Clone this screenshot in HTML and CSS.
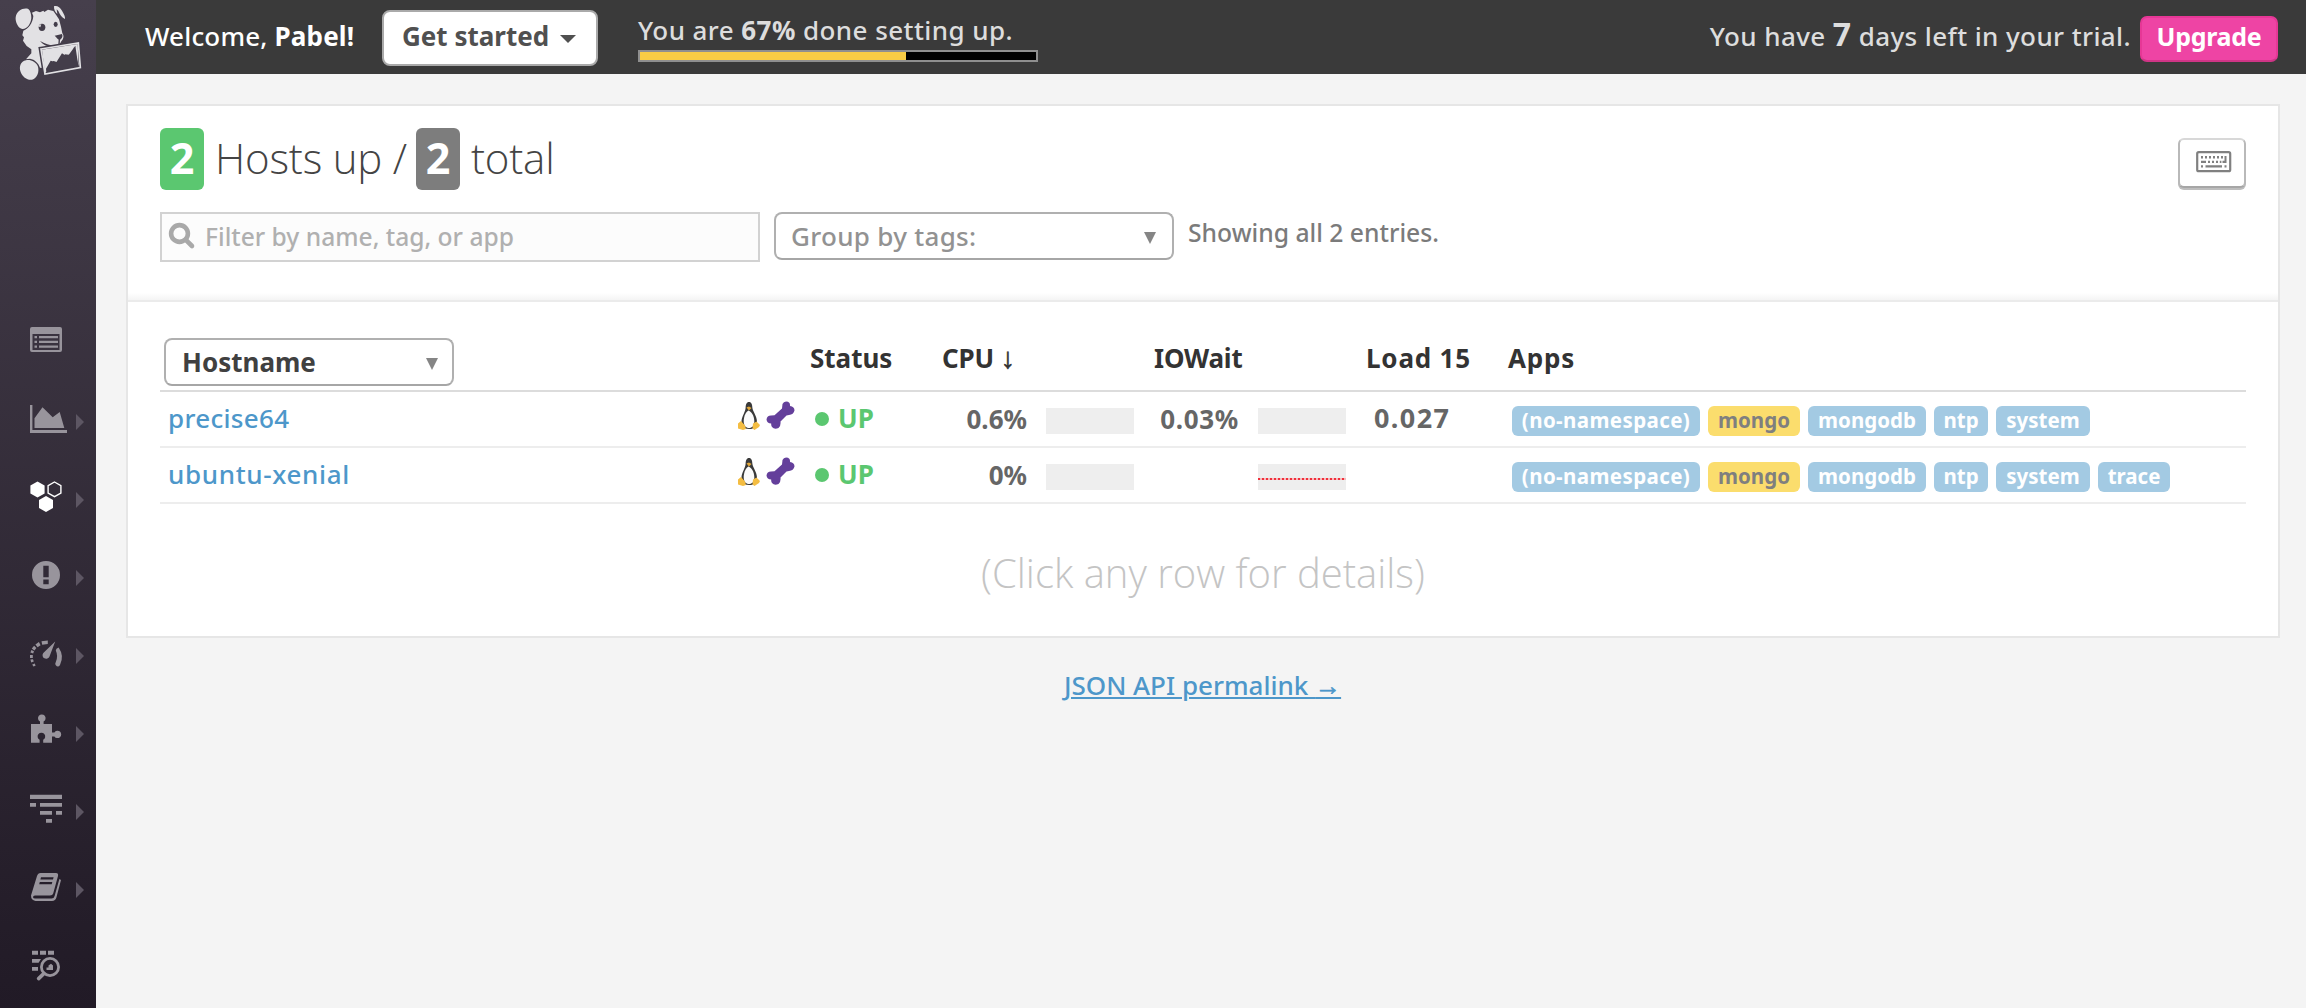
FILE: index.html
```html
<!DOCTYPE html>
<html lang="en">
<head>
<meta charset="utf-8">
<title>Infrastructure List</title>
<link rel="stylesheet" href="styles.css">
</head>
<body>
<aside class="sidebar">
  <svg class="logo" width="96" height="90" viewBox="0 0 96 90">
    <g transform="translate(10 0) scale(.33333)">
      <path class="lt" d="M66 38L78 33L90 37L100 32L103 36L114 29L130 33L138 44L147 58L153 80L157 100C162 106 162 116 154 124C152 130 148 134 142 136C124 138 106 132 90 123C100 134 110 139 122 141L93 145L98 204L90 203C86 190 74 178 60 176L48 178L64 160L64 148L50 138L39 122L42 112L37 106L40 92C56 86 68 70 70 48Z"/>
      <path class="lt ear" d="M55 27C40 22 20 32 17 52C15 66 26 88 38 87C52 86 62 72 64 54C64 42 61 32 55 27Z"/>
      <path class="lt" d="M132 19C140 15 150 22 156 32C162 42 166 50 165 57C156 54 150 44 145 33L140 28L142 42C136 38 131 28 132 19Z"/>
      <path class="lt ear" d="M48 181C32 184 26 200 32 216C38 232 52 241 66 239C82 234 88 216 84 200C78 186 62 178 48 181Z"/>
      <ellipse class="dk" cx="96" cy="82" rx="10" ry="11"/><path class="lt" d="M84 78L94 72L91 82Z"/>
      <ellipse class="dk" cx="137" cy="73" rx="6" ry="8"/>
      <path class="dk" d="M134 107L156 102C160 110 154 118 148 120C142 118 140 112 134 107ZM146 118L150 119L149 134L145 134Z"/>
      <path class="gap" d="M93 147L205 129L211 203L105 222Z"/>
      <path class="edge" d="M93 147L205 129L211 203L105 222Z"/>
      <path class="lt" d="M96 149L203 132L206 200L192 140L189 166L165 163L148 188L130 183L114 212L105 218Z"/>
      <path class="dk" d="M109 217L108 206L122 182L139 187L156 160L172 170L196 137L205 199Z"/>
    </g>
  </svg>
  <nav class="nav">
    <svg viewBox="0 0 96 78"><path fill-rule="evenodd" d="M32 27H60Q62 27 62 29V50Q62 52 60 52H32Q30 52 30 50V29Q30 27 32 27ZM32.5 34V50H59.5V34ZM34.5 36H37V38.3H34.5ZM39 36H58V38.3H39ZM34.5 40.8H37V43.1H34.5ZM39 40.8H58V43.1H39ZM34.5 45.5H37V47.8H34.5ZM39 45.5H58V47.8H39Z"/></svg>
    <svg viewBox="0 0 96 78"><path d="M30 27H32.4V52H67V55H30ZM34.5 40.3L42.5 29.3L52.7 39.3L59.7 34L64.3 50H34.5Z"/><path class="arr" d="M76 36L84 44L76 52Z"/></svg>
    <svg viewBox="0 0 96 78"><path class="on" d="M37.5 25.4L44.6 29.4V37.4L37.5 41.4L30.4 37.4V29.4ZM46 40L53 44V52L46 56L39 52V44Z"/><path class="hex" d="M54.5 26L60.9 29.7V37L54.5 40.7L48.1 37V29.7Z"/><path class="arr" d="M76 36L84 44L76 52Z"/></svg>
    <svg viewBox="0 0 96 78"><path fill-rule="evenodd" d="M46 27A14 14 0 1 1 46 55A14 14 0 1 1 46 27ZM43.3 31.7V43.3H48.7V31.7ZM43.3 45.5V50.2H48.7V45.5Z"/><path class="arr" d="M76 36L84 44L76 52Z"/></svg>
    <svg viewBox="0 0 96 78"><path d="M55.2 29.4L49.5 44.5A3.6 3.6 0 1 1 43.3 41ZM58.6 35.6Q64.5 44 60 53Q58 56 55.6 53Q54.8 52 55.8 50Q58.4 44 55.8 38.5Q55.8 36.5 58.6 35.6Z"/><path d="M41.5 29.2L47.8 28.6V32L42.2 32.8ZM35.4 32.4L38.9 30L40.6 33.2L37.6 35.2ZM31.8 36.6L34.1 33.8L36.4 36L34.4 38.4ZM30.4 40.6L31.4 38L34 39.2L33.2 41.4ZM30 43H32.8V46H30ZM30.4 47.6L33 47.2L33.8 49.6L31.2 50.4ZM32.2 52.4L34.8 51.4L35.6 53.8L33.4 54.6Z"/><path class="arr" d="M76 36L84 44L76 52Z"/></svg>
    <svg viewBox="0 0 96 78"><path d="M31 34H40V31.6A3.8 3.8 0 1 1 43.6 31.6V34H52V42.4H54.4A3.7 3.7 0 1 1 54.4 46.4H52V52.8H43.2V49.8A3.8 3.8 0 1 0 39.6 49.8V52.8H31Z"/><path class="arr" d="M76 36L84 44L76 52Z"/></svg>
    <svg viewBox="0 0 96 78"><path d="M30 26.7H62V31H30ZM30 35H36V38.8H30ZM40 35H62V38.8H40ZM40 43H52V46.8H40ZM56 43H62V46.8H56ZM46 51H52V54.8H46Z"/><path class="arr" d="M76 36L84 44L76 52Z"/></svg>
    <svg viewBox="0 0 96 78"><path fill-rule="evenodd" d="M40.5 27H56Q58.6 27 58 30L53.2 47.5Q52.6 49.6 50 49.6H35Q33 49.8 33 51.2Q33.4 52.6 35 52.6H51.5Q54 52.6 54.6 50L59.4 33L61 34L56.4 51.5Q55.5 54.9 52 54.9H35.5Q31 54.4 31 49.5L37 30Q38 27 40.5 27ZM41 31.2L40.4 33.4H53L53.6 31.2ZM39.8 36L39.2 38.2H51.7L52.3 36Z"/><path class="arr" d="M76 36L84 44L76 52Z"/></svg>
    <svg viewBox="0 0 96 78"><path d="M32 26.7H38V30.8H32ZM40 26.7H46V30.8H40ZM48 26.7H54V30.8H48ZM32 35H41L38.6 38.8H32ZM32 43H38V46.8H32ZM46.5 46V43.5H48.5V41.5L51 39.8L53 41.5V46Z"/><circle class="ring" cx="50" cy="43" r="8.6"/><path class="handle" d="M44 49.4L38.6 54.6"/></svg>
  </nav>
</aside>
<div class="page">
  <header class="topbar">
    <div class="welcome">Welcome, <b>Pabel!</b></div>
    <button class="started">Get started<i class="caret"></i></button>
    <div class="setup">
      <div class="setup-text">You are <b>67%</b> done setting up.</div>
      <div class="bar"><div class="bar-fill" style="width:67.2%"></div></div>
    </div>
    <div class="trial">You have <b>7</b> days left in your trial.</div>
    <button class="upgrade">Upgrade</button>
  </header>
  <main class="card">
    <section class="card-head">
      <div class="title-row">
        <h1 class="title"><span class="badge up">2</span><span class="words">Hosts up /</span><span class="badge">2</span><span class="words">total</span></h1>
        <button class="keys" aria-label="Keyboard shortcuts">
          <svg width="36" height="22" viewBox="0 0 36 22"><rect class="kb" x="1.2" y="1.2" width="33" height="19" rx="1.5"/><path d="M5 5h2v2.500H5zM9 5h2v2.500H9zM13 5h2v2.500h-2zM17 5h2v2.500h-2zM21 5h2v2.500h-2zM25 5h2v2.500h-2zM28.500 5h2v7h-4V9.700h2zM5 9.700h5v2.300H5zM12 9.700h2v2.300h-2zM16 9.700h2v2.300h-2zM20 9.700h2v2.300h-2zM23.800 9.700h1.600v2.300h-1.600zM5 14.300h2v2.300H5zM9.500 14.300h16.500v2.300H9.500zM28.500 14.300h2v2.300h-2z"/></svg>
        </button>
      </div>
      <div class="filters">
        <div class="filter">
          <svg width="28" height="28" viewBox="0 0 28 28"><circle cx="11.500" cy="11.500" r="8.400"/><path d="M17.800 17.800L24 24"/></svg>
          <span>Filter by name, tag, or app</span>
        </div>
        <div class="select group"><span>Group by tags:</span><i class="tri"></i></div>
        <div class="showing">Showing all 2 entries.</div>
      </div>
    </section>
    <section class="hosts">
      <div class="head">
        <div class="select by-name"><span>Hostname</span><i class="tri"></i></div>
        <span>Status</span>
        <span class="tight">CPU <span class="glyph">↓</span></span>
        <span class="tight">IOWait</span>
        <span class="loose">Load 15</span>
        <span class="loose">Apps</span>
      </div>
      <div class="row">
        <a class="name">precise64</a>
        <div class="marks"><svg width="24" height="30" viewBox="0 0 24 30"><use href="#tux"/></svg><svg width="29" height="29" viewBox="0 0 29 29"><use href="#bone"/></svg></div>
        <div class="status"><i class="dot"></i>UP</div>
        <div class="pct">0.6%</div><div class="spark"></div>
        <div class="pct wide">0.03%</div><div class="spark"></div>
        <div class="load">0.027</div>
        <div class="tags"><span class="tag ns">(no-namespace)</span><span class="tag mongo">mongo</span><span class="tag db">mongodb</span><span class="tag ntp">ntp</span><span class="tag sys">system</span></div>
      </div>
      <div class="row">
        <a class="name long">ubuntu-xenial</a>
        <div class="marks"><svg width="24" height="30" viewBox="0 0 24 30"><use href="#tux"/></svg><svg width="29" height="29" viewBox="0 0 29 29"><use href="#bone"/></svg></div>
        <div class="status"><i class="dot"></i>UP</div>
        <div class="pct">0%</div><div class="spark"></div>
        <div class="pct"></div><div class="spark"><div class="flat"></div></div>
        <div class="load"></div>
        <div class="tags"><span class="tag ns">(no-namespace)</span><span class="tag mongo">mongo</span><span class="tag db">mongodb</span><span class="tag ntp">ntp</span><span class="tag sys">system</span><span class="tag trace">trace</span></div>
      </div>
      <p class="hint">(Click any row for details)</p>
    </section>
  </main>
  <a class="permalink">JSON API permalink <span class="glyph">→</span></a>
</div>
<svg class="defs" width="0" height="0">
  <symbol id="tux" viewBox="0 0 24 30">
    <path fill="#3a3a3a" d="M12 1C14.500 1 15.200 3.500 15.400 7C16 11 20 15 20 21C20 26 18 28 12 28C6 28 4 25 4.500 20C5 15 8.300 11 8.600 7C8.700 3.500 9.500 1 12 1Z"/>
    <path fill="#fbfbfb" d="M11.500 9.500C14 10 17.300 15 17.300 20C17.300 25 15 27 12 27C9 27 6.700 25 6.700 20C6.700 15 9.500 10 11.500 9.500Z"/>
    <path fill="#e2a83a" d="M9.500 6.500L12 5.500L14.500 7L12 9.500Z"/>
    <path fill="#f4bd42" d="M4 20L8 24.500L9 28L6 29L1 27.500V22.500ZM19.500 20.500L23 24L22 26L17.500 29L15.500 27.500L16 22.500Z"/>
  </symbol>
  <symbol id="bone" viewBox="0 0 29 29">
    <path fill="#643f9b" d="M16.500 3Q18-.5 22 .800Q24.500 2 24 5Q28.500 5.500 28.500 9.500Q27.500 13.500 23 14L20.500 14.500L14.500 20.500Q15 25 12.500 27Q8.500 29 6 26Q5 24.500 5.200 22.500Q1 22.500 .500 18.500Q1 14.500 5 14.500L8.500 14.300L16 7.500Z"/>
  </symbol>
</svg>
</body>
</html>
```
FILE: styles.css
```css
* { box-sizing: border-box; }

body {
  margin: 0;
  min-height: 1008px;
  display: flex;
  background: #f4f4f4;
  font: 500 26px "Noto Sans", "Open Sans", sans-serif;
  color: #3f3f3f;
}

button { font: inherit; margin: 0; }

/* sidebar */
.sidebar {
  width: 96px;
  height: 1008px;
  flex: none;
  background: linear-gradient(#463f4c, #211a26);
}
.logo { display: block; }
.lt { fill: #e2e1e4; }
.dk { fill: #433d4a; }
.ear { stroke: #433d4a; stroke-width: 4; paint-order: stroke; }
.gap { stroke: #433d4a; stroke-width: 14; }
.edge { fill: #433d4a; stroke: #e2e1e4; stroke-width: 5; }
.nav { display: flex; flex-direction: column; padding-top: 210px; }
.nav svg { width: 96px; height: 78px; fill: #98949c; }
.nav .arr { fill: #5d5663; }
.nav .on { fill: #fff; }
.nav .hex { fill: none; stroke: #fff; stroke-width: 1.4; }
.nav .ring { fill: none; stroke: #98949c; stroke-width: 2.8; }
.nav .handle { stroke: #98949c; stroke-width: 3.6; stroke-linecap: round; }

.page { flex: 1; display: flex; flex-direction: column; }

/* top bar */
.topbar {
  height: 74px;
  padding: 0 28px 0 49px;
  display: flex;
  align-items: flex-start;
  background: #3a3a3a;
  color: #ddd;
  white-space: nowrap;
}
.welcome { width: 237px; line-height: 72px; color: #fff; letter-spacing: .17px; }
.started {
  width: 216px;
  height: 56px;
  padding: 0 0 0 18px;
  margin-top: 10px;
  display: flex;
  align-items: flex-start;
  gap: 11px;
  border: 2px solid #aaa;
  border-radius: 8px;
  background: #fff;
  color: #505050;
  font-weight: 700;
  line-height: 48px;
}
.caret {
  margin-top: 23px;
  border: 8px solid transparent;
  border-top-color: #505050;
  border-bottom: 0;
}
.setup { width: 400px; margin-left: 40px; }
.setup-text { height: 50px; line-height: 60px; letter-spacing: .430px; }
.bar { height: 12px; border: 2px solid #8f8f8f; background: #000; }
.bar-fill { height: 100%; background: #f8cc45; }
.trial { margin-left: auto; line-height: 72px; letter-spacing: .400px; }
.trial b { font-size: 32px; line-height: 1; }
.upgrade {
  width: 138px;
  height: 46px;
  margin: 16px 0 0 9px;
  padding: 0 0 6px;
  border: 2px solid #e63796;
  border-bottom-color: #cf3586;
  border-radius: 7px;
  background: #ee44a4;
  color: #fff;
  font-size: 25px;
  font-weight: 700;
  line-height: 36px;
  letter-spacing: -.3px;
}

/* host card */
.card {
  height: 534px;
  margin: 30px 26px 0 30px;
  border: 2px solid #e6e6e6;
  background: #fff;
}
.card-head {
  height: 196px;
  padding: 22px 32px 0;
  background: linear-gradient(#fff 187px, #f4f4f4 194px, #ebebeb 194px);
}
.title-row { display: flex; justify-content: space-between; height: 84px; }
.title {
  margin: 0;
  display: flex;
  height: 62px;
  font: 300 42px/60px "Open Sans", sans-serif;
  color: #444;
}
.words { padding: 0 9px 0 11px; letter-spacing: -.200px; }
.badge {
  width: 44px;
  height: 62px;
  border-radius: 6px;
  background: #7d7d7d;
  color: #fff;
  text-align: center;
  font-size: 43px;
  font-weight: 700;
}
.badge.up { background: #5bc770; }
.keys {
  width: 68px;
  height: 50px;
  margin: 10px 0 0;
  padding: 0 0 2px 3px;
  display: flex;
  align-items: center;
  justify-content: center;
  border: 2px solid #b9b9b9;
  border-top-color: #d8d8d8;
  border-bottom-color: #a6a6a6;
  border-radius: 6px;
  background: #fff;
  box-shadow: 0 2px 0 #bdbdbd;
}
.keys svg { fill: #808080; }
.keys .kb { fill: none; stroke: #808080; stroke-width: 2.2; }

.filters { display: flex; }
.filter {
  width: 600px;
  height: 50px;
  padding: 0 7px;
  display: flex;
  gap: 9px;
  border: 2px solid #d2d2d2;
  background: #fcfcfc;
  color: #b0b0b0;
  font-size: 24.600px;
  line-height: 45px;
}
.filter svg { margin: 8px 0 0 -1px; fill: none; stroke: #a9a9a9; stroke-width: 4.600; stroke-linecap: round; }
.select {
  height: 48px;
  display: flex;
  justify-content: space-between;
  border: 2px solid #b0b0b0;
  border-bottom-color: #a6a6a6;
  border-radius: 8px;
  background: #fff;
  line-height: 44px;
}
.tri {
  margin-top: 18px;
  border: 6.500px solid transparent;
  border-top: 12px solid #858585;
  border-bottom: 0;
}
.group { width: 400px; margin-left: 14px; padding: 0 16px 0 15px; color: #929292; letter-spacing: .3px; }
.showing { margin-left: 14px; font-size: 24.700px; line-height: 41px; color: #7b7b7b; }

/* host table */
.hosts { padding: 36px 32px 0; }
.head {
  height: 54px;
  display: grid;
  grid-template-columns: 650px 132px 212px 212px 142px 1fr;
  border-bottom: 2px solid #dcdcdc;
  font-weight: 700;
  line-height: 40px;
  color: #333;
}
.by-name { width: 290px; margin-left: 4px; padding: 0 14px 0 16px; line-height: 44px; color: #404040; }
.glyph { font: 700 29px/1 "Liberation Sans", Arial, sans-serif; -webkit-text-stroke: .6px currentColor; }
.tight { letter-spacing: -.2px; }
.loose { letter-spacing: .8px; }
.row {
  height: 56px;
  display: grid;
  grid-template-columns: 577px 77px 126px 87px 107px 105px 107px 162px 1fr;
  border-bottom: 2px solid #ededed;
  line-height: 52px;
}
.name { padding-left: 8px; color: #4d97ca; letter-spacing: .3px; }
.long { letter-spacing: .650px; }
.marks { display: flex; gap: 5px; padding-top: 9px; }
.status { display: flex; gap: 9px; padding-left: 1px; color: #5bc770; font-weight: 700; }
.dot { width: 14px; height: 14px; margin-top: 20px; border-radius: 50%; background: #5bc770; }
.pct { text-align: right; font-weight: 700; line-height: 54px; color: #666; }
.wide { letter-spacing: .700px; }
.spark { height: 26px; margin: 16px 0 0 19px; padding-top: 14px; background: #eee; }
.flat { height: 2px; background: repeating-linear-gradient(90deg, #f0303c 0 2px, #f6b9bb 2px 4px); }
.load { padding-left: 28px; font-weight: 700; font-size: 27px; color: #666; letter-spacing: 1.400px; }
.tags { display: flex; gap: 8px; padding: 14px 0 0 4px; }
.tag {
  height: 30px;
  border-radius: 6px;
  background: #a3cae3;
  color: #fff;
  font-size: 20.500px;
  font-weight: 700;
  line-height: 28px;
  text-align: center;
}
.ns { width: 188px; letter-spacing: .400px; }
.mongo { width: 92px; background: #fbdd6d; color: #7f7f7f; }
.db { width: 118px; }
.ntp { width: 54px; }
.sys { width: 94px; }
.trace { width: 72px; }
.hint {
  margin: 29px 0 0;
  text-align: center;
  font: 300 40px/80px "Open Sans", sans-serif;
  color: #c4c4c4;
}
.permalink {
  align-self: center;
  margin: 27px 0 0 3px;
  line-height: 40px;
  color: #4d97ca;
  text-decoration: underline;
  text-decoration-thickness: 2px;
  text-underline-offset: 2px;
}
.permalink .glyph { font-size: 26px; }
.defs { position: absolute; }
```
